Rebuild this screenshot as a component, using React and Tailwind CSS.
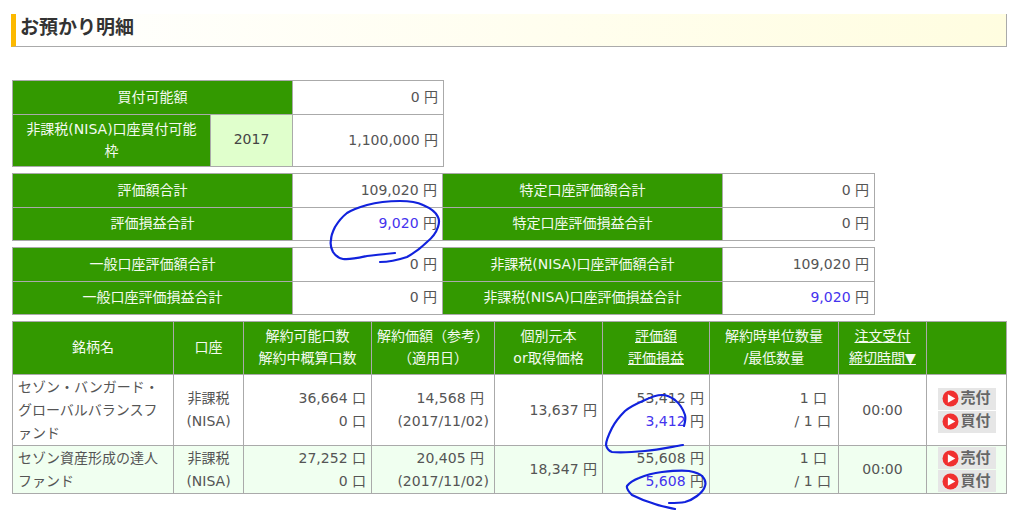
import React from 'react';

const font = { fontFamily: '"DejaVu Sans", "Noto Sans CJK JP", sans-serif' };

const th = 'border border-[#aaaaaa] bg-[#339900] text-[#f4faf0] font-normal text-center px-1 pt-0 pb-[2px] leading-[28px]';
const td = 'border border-[#aaaaaa] text-right text-[#555555] px-[5px] pt-0 pb-[2px] leading-[24px]';
const blue = 'text-[#4433ee]';

function Amount({ value, isBlue }) {
  return (
    <>
      <span className={isBlue ? blue : ''}>{value}</span> 円
    </>
  );
}

function SummaryTable({ rows, className }) {
  return (
    <table className={`border-collapse table-fixed w-[862px] ${className}`}>
      <colgroup>
        <col className="w-[280px]" />
        <col className="w-[150px]" />
        <col className="w-[280px]" />
        <col className="w-[152px]" />
      </colgroup>
      <tbody>
        {rows.map((r, i) => (
          <tr key={i} className={i === 0 ? 'h-[34px]' : 'h-[33px]'}>
            <th className={th}>{r[0]}</th>
            <td className={td}><Amount value={r[1]} isBlue={r[4] === 1} /></td>
            <th className={th}>{r[2]}</th>
            <td className={td}><Amount value={r[3]} isBlue={r[4] === 2} /></td>
          </tr>
        ))}
      </tbody>
    </table>
  );
}

function OrderButton({ label }) {
  return (
    <div className="w-[58px] h-[22px] bg-[#e6e6e6] flex items-center justify-center gap-[1px] text-[15px] font-bold text-[#666666] leading-none mx-auto">
      <svg width="17" height="17" viewBox="0 0 16 16">
        <circle cx="8" cy="8" r="7.5" fill="#f03030" />
        <path d="M5.5 4 L12.5 8 L5.5 12 Z" fill="#ffffff" />
      </svg>
      <span>{label}</span>
    </div>
  );
}

function FundRow({ name, bg, height, fund }) {
  const cell = `border border-[#aaaaaa] text-[#555555] px-[5px] py-0 leading-[23px] ${bg}`;
  return (
    <tr className={height}>
      <td className={`${cell} text-left`}>{name}</td>
      <td className={`${cell} text-center`}>非課税<br />(NISA)</td>
      <td className={`${cell} text-right`}>{fund.units} 口<br />0 口</td>
      <td className={`${cell} text-right`}>
        <div className="pr-[5px]">{fund.price} 円</div>
        <div>(2017/11/02)</div>
      </td>
      <td className={`${cell} text-right`}>{fund.cost} 円</td>
      <td className={`${cell} text-right`}>
        {fund.value} 円<br /><span className={blue}>{fund.gain}</span> 円
      </td>
      <td className={`${cell} text-right !pr-[7px]`}>
        <div className="pr-[4px]">1 口</div>
        <div>/ 1 口</div>
      </td>
      <td className={`${cell} text-center`}>00:00</td>
      <td className={`${cell} text-center !p-0`}>
        <div className="flex flex-col gap-[1px]">
          <OrderButton label="売付" />
          <OrderButton label="買付" />
        </div>
      </td>
    </tr>
  );
}

export default function App() {
  return (
    <div className="relative w-[1024px] h-[512px] overflow-hidden bg-white pt-[14px] pl-[11px] text-[14px]" style={font}>
      <div className="w-[996px] h-[33px] border-b border-r border-[#aaaaaa] border-l-[5px] border-l-[#fcb900] bg-gradient-to-r from-white to-[#fffde0] flex items-center pl-[4px] pb-[5px]">
        <h1 className="text-[19px] font-bold text-[#333333] leading-none">お預かり明細</h1>
      </div>

      <div className="pl-[1px] pt-[33px]">
        <table className="border-collapse table-fixed w-[431px]">
          <colgroup>
            <col className="w-[198px]" />
            <col className="w-[82px]" />
            <col className="w-[151px]" />
          </colgroup>
          <tbody>
            <tr className="h-[34px]">
              <th colSpan={2} className={th}>買付可能額</th>
              <td className={td}>0 円</td>
            </tr>
            <tr className="h-[52px]">
              <th className="border border-[#aaaaaa] bg-[#339900] text-[#f4faf0] font-normal text-center px-[12px] pt-0 pb-[2px] leading-[22px]">非課税(NISA)口座買付可能枠</th>
              <td className="border border-[#aaaaaa] bg-[#e0ffcc] text-[#444444] text-center pb-[2px]">2017</td>
              <td className={td}>1,100,000 円</td>
            </tr>
          </tbody>
        </table>

        <SummaryTable
          className="mt-[6px]"
          rows={[
            ['評価額合計', '109,020', '特定口座評価額合計', '0', 0],
            ['評価損益合計', '9,020', '特定口座評価損益合計', '0', 1],
          ]}
        />
        <SummaryTable
          className="mt-[6px]"
          rows={[
            ['一般口座評価額合計', '0', '非課税(NISA)口座評価額合計', '109,020', 0],
            ['一般口座評価損益合計', '0', '非課税(NISA)口座評価損益合計', '9,020', 2],
          ]}
        />

        <table className="border-collapse table-fixed w-[994px] mt-[6px]">
          <colgroup>
            <col className="w-[161px]" />
            <col className="w-[70px]" />
            <col className="w-[128px]" />
            <col className="w-[123px]" />
            <col className="w-[108px]" />
            <col className="w-[107px]" />
            <col className="w-[129px]" />
            <col className="w-[88px]" />
            <col className="w-[80px]" />
          </colgroup>
          <thead>
            <tr className="h-[53px] [&>th]:leading-[22px]">
              <th className={th}>銘柄名</th>
              <th className={th}>口座</th>
              <th className={th}>解約可能口数<br />解約中概算口数</th>
              <th className={`${th} !px-0`}>解約価額（参考）<br />（適用日）</th>
              <th className={th}>個別元本<br />or取得価格</th>
              <th className={`${th} underline`}>評価額<br />評価損益</th>
              <th className={th}>解約時単位数量<br />/最低数量</th>
              <th className={`${th} underline`}>注文受付<br />締切時間▼</th>
              <th className={th}></th>
            </tr>
          </thead>
          <tbody>
            <FundRow
              name="セゾン・バンガード・グローバルバランスファンド"
              bg="bg-white"
              height="h-[71px]"
              fund={{ units: '36,664', price: '14,568', cost: '13,637', value: '53,412', gain: '3,412' }}
            />
            <FundRow
              name="セゾン資産形成の達人ファンド"
              bg="bg-[#f0fff0]"
              height="h-[48px]"
              fund={{ units: '27,252', price: '20,405', cost: '18,347', value: '55,608', gain: '5,608' }}
            />
          </tbody>
        </table>
      </div>

      {/* hand drawn circles on top of the screenshot */}
      <svg className="absolute left-0 top-0 pointer-events-none" width="1024" height="512" fill="none" stroke="#1122dd" strokeWidth="2.2" strokeLinecap="round" strokeLinejoin="round">
        <path d="M395 253 C385 254 375 255 367 256 C358 258 350 260 343 259 C338 258 335 255 333 252 C331 248 330 244 331 240 C331 235 333 231 335 227 C338 222 342 217 347 213 C353 209 360 207 367 205 C378 202 390 201 400 201 C409 201 417 202 423 205 C430 208 436 212 438 217 C440 221 439 224 438 227 C436 233 432 238 427 242 C421 248 414 253 407 257 C398 260 389 262 380 262" />
        <path d="M684 426 C685 422 686 419 685 415 C683 409 680 404 675 400 C671 397 667 395 662 395 C656 395 651 397 645 400 C638 403 631 406 625 411 C620 416 615 422 612 428 C609 434 606 440 606 445 C607 449 609 451 612 452 C623 453 634 452 645 451 C658 450 671 447 683 445" />
        <path d="M675 509 C667 507 659 506 652 503 C645 501 638 498 632 495 C629 492 626 489 627 486 C630 482 634 480 639 478 C646 475 654 473 662 472 C671 471 680 470 689 471 C694 472 699 473 702 476 C705 479 706 483 705 486 C704 490 701 493 697 496 C693 499 689 501 685 502 C680 503 674 503 669 503" />
      </svg>
    </div>
  );
}
